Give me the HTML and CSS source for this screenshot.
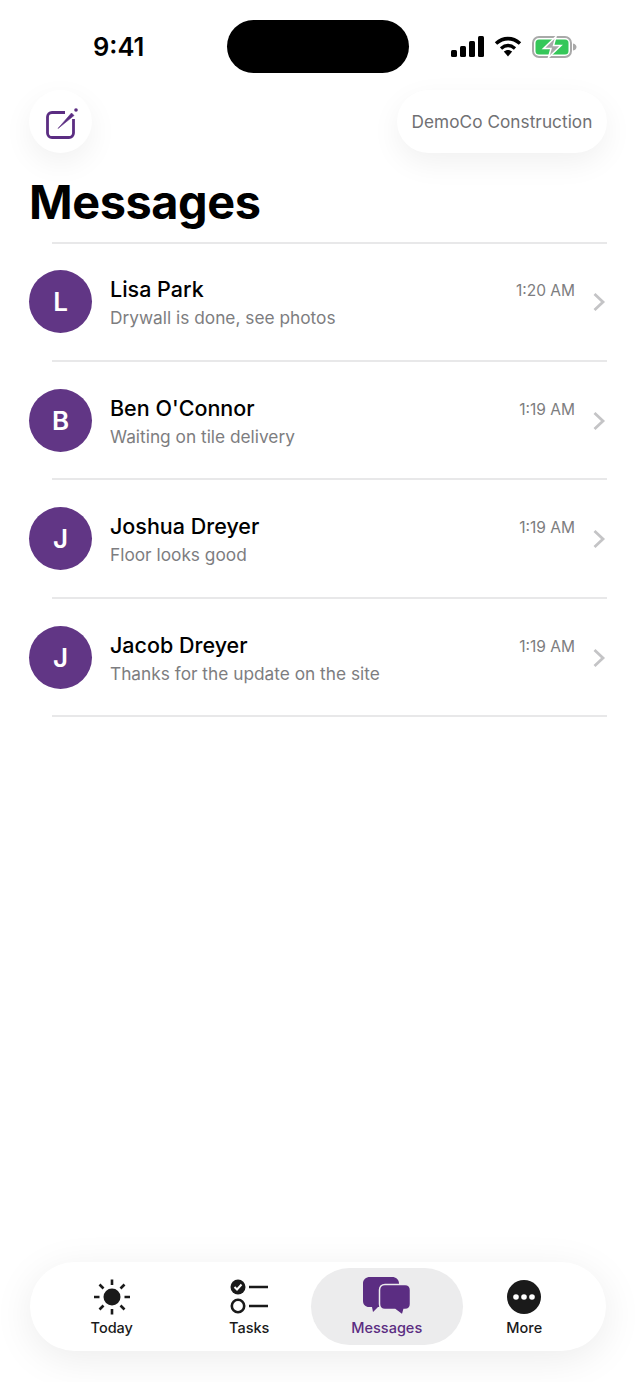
FILE: index.html
```html
<!DOCTYPE html>
<html lang="en">
<head>
  <meta charset="UTF-8" />
  <title>Messages</title>
  <link rel="stylesheet" href="styles.css">
</head>
<body>
  <div class="screen">
    <!-- status bar -->
    <div class="status-bar">
      <span class="clock">9:41</span>
      <div class="island"></div>
      <div class="status-icons">
        <svg width="33" height="21" viewBox="0 0 33 21"><rect x="0" y="14" width="6" height="7" rx="1.5"/><rect x="9" y="10" width="6" height="11" rx="1.5"/><rect x="18" y="5" width="6" height="16" rx="1.5"/><rect x="27" y="0" width="6" height="21" rx="1.5"/></svg>
        <svg width="28" height="21" viewBox="0 0 28 21"><path d="M2 7.5C9.5 1 18.5 1 26 7.5" fill="none" stroke="#000" stroke-width="3.6"/><path d="M7 12.5C11.5 8.7 16.5 8.7 21 12.5" fill="none" stroke="#000" stroke-width="3.4"/><path d="M9.8 15.6C12.4 13.4 15.6 13.4 18.2 15.6L14 20.4Z"/></svg>
        <svg width="46" height="22" viewBox="0 0 46 22"><rect x="1" y="1" width="38" height="20" rx="6" fill="none" stroke="#a9a9a9" stroke-width="2"/><rect x="3.5" y="3.5" width="33" height="15" rx="3.5" fill="#35c759"/><path d="M41 7.5c2.5.5 3.5 2 3.5 3.5s-1 3-3.5 3.5z" fill="#a9a9a9"/><path d="M24 0.5 11.5 12.5H19L16.5 21.5 29 9.5H21.5Z" fill="#a9a9a9" stroke="#fff" stroke-width="1.5"/></svg>
      </div>
    </div>

    <div class="top-actions">
      <button class="round-btn">
        <svg width="34" height="34" viewBox="0 0 34 34" fill="none"><path d="M21 7.500H8A4.500 4.500 0 0 0 3.500 12V28A4.500 4.500 0 0 0 8 32.500H25A4.500 4.500 0 0 0 29.500 28V14" stroke="#5b2d82" stroke-width="2.800"/><path d="M14 23.500 27.500 8 30 10.500Z" fill="#5b2d82" stroke="#5b2d82" stroke-width=".6"/><circle cx="32" cy="5" r="1.800" fill="#5b2d82"/></svg>
      </button>
      <button class="company-btn">DemoCo Construction</button>
    </div>

    <h1>Messages</h1>

    <div class="thread-list">
      <div class="thread">
        <div class="avatar">L</div>
        <div class="thread-text">
          <div class="name">Lisa Park</div>
          <div class="preview">Drywall is done, see photos</div>
        </div>
        <div class="time">1:20 AM</div>
        <svg class="chevron" width="14" height="20" viewBox="0 0 14 20" fill="none"><path d="M2.500 2 11 10 2.500 18" stroke="#c4c4c6" stroke-width="2.800"/></svg>
      </div>
      <div class="thread">
        <div class="avatar">B</div>
        <div class="thread-text">
          <div class="name">Ben O'Connor</div>
          <div class="preview">Waiting on tile delivery</div>
        </div>
        <div class="time">1:19 AM</div>
        <svg class="chevron" width="14" height="20" viewBox="0 0 14 20" fill="none"><path d="M2.500 2 11 10 2.500 18" stroke="#c4c4c6" stroke-width="2.800"/></svg>
      </div>
      <div class="thread">
        <div class="avatar">J</div>
        <div class="thread-text">
          <div class="name">Joshua Dreyer</div>
          <div class="preview">Floor looks good</div>
        </div>
        <div class="time">1:19 AM</div>
        <svg class="chevron" width="14" height="20" viewBox="0 0 14 20" fill="none"><path d="M2.500 2 11 10 2.500 18" stroke="#c4c4c6" stroke-width="2.800"/></svg>
      </div>
      <div class="thread">
        <div class="avatar">J</div>
        <div class="thread-text">
          <div class="name">Jacob Dreyer</div>
          <div class="preview">Thanks for the update on the site</div>
        </div>
        <div class="time">1:19 AM</div>
        <svg class="chevron" width="14" height="20" viewBox="0 0 14 20" fill="none"><path d="M2.500 2 11 10 2.500 18" stroke="#c4c4c6" stroke-width="2.800"/></svg>
      </div>
    </div>

    <!-- bottom tabs -->
    <nav class="tab-bar">
      <div class="tab">
        <svg width="38" height="36" viewBox="0 0 38 36" fill="#1a1a1a" stroke="#1a1a1a"><circle cx="19" cy="18" r="8.500" stroke="none"/><g stroke-width="2.600"><path d="M19 0.500V6M19 30V35.500M1 18H6.500M31.500 18H37M6.500 5.500 10.500 9.500M27.500 26.500 31.500 30.500M6.500 30.500 10.500 26.500M27.500 9.500 31.500 5.500"/></g></svg>
        <span>Today</span>
      </div>
      <div class="tab">
        <svg width="38" height="36" viewBox="0 0 38 36" fill="none"><circle cx="8" cy="8" r="7.500" fill="#1a1a1a"/><path d="M4.500 8 7 10.500 11.500 5.500" stroke="#fff" stroke-width="2"/><circle cx="8" cy="27" r="6.200" stroke="#1a1a1a" stroke-width="2.600"/><path d="M19 8H38M19 27H38" stroke="#1a1a1a" stroke-width="2.600"/></svg>
        <span>Tasks</span>
      </div>
      <div class="tab active">
        <svg width="48" height="38" viewBox="0 0 48 38"><path d="M7 0H29C33 0 36 2.500 36 6.500V24C36 27.500 33.500 30 30 30H15L10 35 9 30H6C2.500 30 0 27.500 0 24V6.500C0 2.500 3 0 7 0Z" fill="#5b2d82"/><path d="M22 7.500H42C45.500 7.500 47.500 10 47.500 13V27C47.500 30.500 45.500 32.500 42 32.500H41L39.500 38 32 32.500H22C18.500 32.500 16.500 30.500 16.500 27V13C16.500 10 18.500 7.500 22 7.500Z" fill="#5b2d82" stroke="#ececed" stroke-width="1.500"/></svg>
        <span>Messages</span>
      </div>
      <div class="tab">
        <svg width="34" height="36" viewBox="0 0 34 36"><circle cx="17" cy="18" r="17" fill="#1a1a1a"/><circle cx="9" cy="18" r="2.800" fill="#fff"/><circle cx="17" cy="18" r="2.800" fill="#fff"/><circle cx="25" cy="18" r="2.800" fill="#fff"/></svg>
        <span>More</span>
      </div>
    </nav>
  </div>
</body>
</html>
```

FILE: styles.css
```css
:root {
  --purple: #5b2d82;
  --avatar: #613685;
  --line: #e8e8e9;
  --gray: #7d7d80;
  --dark: #1a1a1a;
}
* { box-sizing: border-box; }
body {
  margin: 0;
  background: #fff;
  font-family: Inter, 'Liberation Sans', sans-serif;
  color: #000;
}
.screen {
  height: 1382px;
  display: flex;
  flex-direction: column;
  overflow: hidden;
}

.status-bar {
  display: flex;
  align-items: center;
  height: 53px;
  margin-top: 20px;
  padding-left: 93px;
}
.clock {
  width: 134px;
  font-size: 25.500px;
  font-weight: 600;
  line-height: 53px;
}
.island {
  width: 182px;
  height: 53px;
  background: #000;
  border-radius: 27px;
}
.status-icons {
  display: flex;
  align-items: center;
  gap: 10px;
  margin-left: 42px;
}

.top-actions {
  display: flex;
  justify-content: space-between;
  margin-top: 17px;
  padding: 0 29px;
}
.round-btn,
.company-btn {
  height: 63px;
  border: none;
  background: #fff;
  border-radius: 32px;
  box-shadow: 0 10px 30px rgba(0,0,0,0.06);
  font-family: inherit;
}
.round-btn {
  width: 63px;
  padding: 0;
  display: flex;
  align-items: center;
  justify-content: center;
}
.company-btn {
  width: 210px;
  padding: 0;
  font-size: 17.200px;
  color: #707073;
  letter-spacing: 0.05px;
}

h1 {
  margin: 21px 0 0 29px;
  font-size: 46.800px;
  font-weight: 700;
  line-height: 56px;
  letter-spacing: -0.4px;
}

.thread-list {
  margin-top: 13px;
  margin-left: 29px;
  margin-right: 29px;
}
.thread {
  display: flex;
  align-items: center;
  height: 118.500px;
  position: relative;
}
.thread::before {
  content: '';
  position: absolute;
  left: 23px;
  right: 0;
  bottom: 0;
  height: 2px;
  background: var(--line);
}
.thread:first-child::after {
  content: '';
  position: absolute;
  left: 23px;
  right: 0;
  top: -1px;
  height: 2px;
  background: var(--line);
}
.avatar {
  width: 63px;
  height: 63px;
  flex: none;
  margin-bottom: 1px;
  border-radius: 50%;
  background: var(--avatar);
  color: #fff;
  font-size: 26px;
  font-weight: 600;
  display: flex;
  align-items: center;
  justify-content: center;
}
.thread-text {
  flex: 1;
  margin-left: 18px;
  padding-top: 1px;
}
.name {
  font-size: 21.500px;
  font-weight: 500;
  line-height: 28px;
  margin-bottom: 3px;
}
.preview {
  font-size: 17.300px;
  color: var(--gray);
  line-height: 24px;
}
.time {
  align-self: flex-start;
  margin-top: 37px;
  font-size: 15.500px;
  color: var(--gray);
  line-height: 22px;
}
.chevron {
  margin-left: 17px;
  margin-right: 1px;
}

.tab-bar {
  display: grid;
  grid-template-columns: repeat(4, 137.500px);
  margin: auto 30px 31px 30px;
  height: 89px;
  padding: 6px 0 6px 13px;
  background: #fff;
  border-radius: 45px;
  box-shadow: 0 8px 40px rgba(0,0,0,0.08);
}
.tab {
  display: flex;
  flex-direction: column;
  align-items: center;
  justify-content: flex-end;
  gap: 4px;
  border-radius: 39px;
  padding-bottom: 8px;
  font-size: 14.500px;
  font-weight: 450;
  color: var(--dark);
}
.tab span { line-height: 18px; }
.tab.active {
  margin: 0 -7px;
  background: #ececed;
  color: var(--purple);
}
```
